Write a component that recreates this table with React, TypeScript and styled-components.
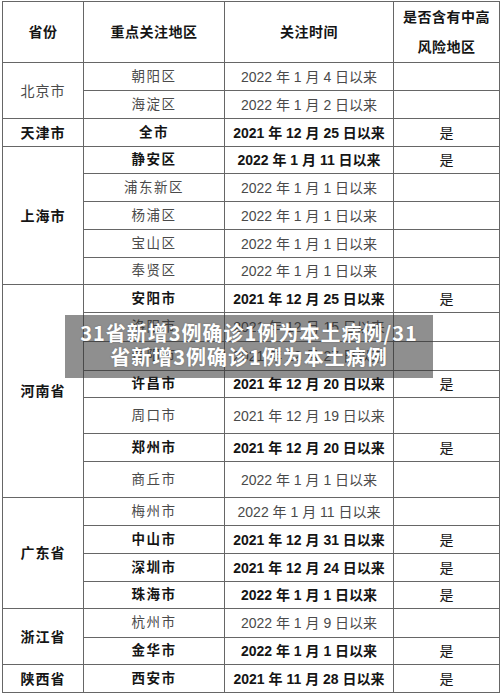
import React from 'react'
import styled, { createGlobalStyle } from 'styled-components'

type Row = { area: string; date: string; high?: boolean; bold?: boolean; h: number }
type Province = { name: string; bold?: boolean; rows: Row[] }

const data: Province[] = [
  {
    name: '北京市',
    rows: [
      { area: '朝阳区', date: '2022 年 1 月 4 日以来', h: 28 },
      { area: '海淀区', date: '2022 年 1 月 2 日以来', h: 28 },
    ],
  },
  {
    name: '天津市',
    bold: true,
    rows: [{ area: '全市', date: '2021 年 12 月 25 日以来', high: true, bold: true, h: 28 }],
  },
  {
    name: '上海市',
    bold: true,
    rows: [
      { area: '静安区', date: '2022 年 1 月 11 日以来', high: true, bold: true, h: 27 },
      { area: '浦东新区', date: '2022 年 1 月 1 日以来', h: 28 },
      { area: '杨浦区', date: '2022 年 1 月 1 日以来', h: 28 },
      { area: '宝山区', date: '2022 年 1 月 1 日以来', h: 28 },
      { area: '奉贤区', date: '2022 年 1 月 1 日以来', h: 27 },
    ],
  },
  {
    name: '河南省',
    bold: true,
    rows: [
      { area: '安阳市', date: '2021 年 12 月 25 日以来', high: true, bold: true, h: 28 },
      { area: '洛阳市', date: '2021 年 12 月 15 日以来', h: 29 },
      { area: '信阳市', date: '2021 年 12 月 27 日以来', h: 29 },
      { area: '许昌市', date: '2021 年 12 月 20 日以来', high: true, bold: true, h: 27 },
      { area: '周口市', date: '2021 年 12 月 19 日以来', h: 36 },
      { area: '郑州市', date: '2021 年 12 月 20 日以来', high: true, bold: true, h: 28 },
      { area: '商丘市', date: '2022 年 1 月 1 日以来', h: 36 },
    ],
  },
  {
    name: '广东省',
    bold: true,
    rows: [
      { area: '梅州市', date: '2022 年 1 月 11 日以来', h: 28 },
      { area: '中山市', date: '2021 年 12 月 31 日以来', high: true, bold: true, h: 28 },
      { area: '深圳市', date: '2021 年 12 月 24 日以来', high: true, bold: true, h: 28 },
      { area: '珠海市', date: '2022 年 1 月 1 日以来', high: true, bold: true, h: 27 },
    ],
  },
  {
    name: '浙江省',
    bold: true,
    rows: [
      { area: '杭州市', date: '2022 年 1 月 9 日以来', h: 29 },
      { area: '金华市', date: '2022 年 1 月 1 日以来', high: true, bold: true, h: 27 },
    ],
  },
  {
    name: '陕西省',
    bold: true,
    rows: [{ area: '西安市', date: '2021 年 11 月 28 日以来', high: true, bold: true, h: 28 }],
  },
]

const GlobalStyle = createGlobalStyle`
  html, body {
    margin: 0;
    padding: 0;
    background: #fff;
  }
  body {
    font-family: "Liberation Sans", "Noto Sans CJK SC", sans-serif;
  }
`

export default function App() {
  return (
    <Page>
      <GlobalStyle />
      <Table>
        <colgroup>
          <col style={{ width: 81 }} />
          <col style={{ width: 141 }} />
          <col style={{ width: 169 }} />
          <col style={{ width: 106 }} />
        </colgroup>
        <thead>
          <HeadRow>
            <HeadCell>省份</HeadCell>
            <HeadCell>重点关注地区</HeadCell>
            <HeadCell>关注时间</HeadCell>
            <HeadCell $tall>
              是否含有中高
              <br />
              风险地区
            </HeadCell>
          </HeadRow>
        </thead>
        <tbody>
          {data.map((p) =>
            p.rows.map((r, i) => (
              <BodyRow key={p.name + r.area} style={{ height: r.h }}>
                {i === 0 && (
                  <ProvinceCell rowSpan={p.rows.length} $bold={p.bold}>
                    {p.name}
                  </ProvinceCell>
                )}
                <AreaCell $bold={r.bold}>{r.area}</AreaCell>
                <DateCell $bold={r.bold}>{r.date}</DateCell>
                <FlagCell>{r.high ? '是' : ''}</FlagCell>
              </BodyRow>
            ))
          )}
        </tbody>
      </Table>
      <Caption>
        <CaptionLine>31省新增3例确诊1例为本土病例/31</CaptionLine>
        <CaptionLine>省新增3例确诊1例为本土病例</CaptionLine>
      </Caption>
    </Page>
  )
}

const Page = styled.div`
  position: relative;
  width: 500px;
  height: 694px;
  padding: 1px 0 0 2px;
  box-sizing: border-box;
  overflow: hidden;
`

const Table = styled.table`
  width: 498px;
  table-layout: fixed;
  border-collapse: collapse;
  border: 1px solid #555;
`

const HeadRow = styled.tr`
  height: 61px;
`

const Cell = styled.td<{ $bold?: boolean }>`
  border: 1px solid #666;
  padding: 0;
  text-align: center;
  vertical-align: middle;
  font-size: 13.5px;
  line-height: 16px;
  white-space: nowrap;
  font-weight: ${({ $bold }) => ($bold ? 700 : 400)};
  color: ${({ $bold }) => ($bold ? '#151515' : '#4a4a4a')};
`

const HeadCell = styled.th<{ $tall?: boolean }>`
  border: 1px solid #666;
  padding: 0;
  text-align: center;
  vertical-align: middle;
  font-size: 14px;
  font-weight: 700;
  color: #151515;
  letter-spacing: 0.5px;
  line-height: ${({ $tall }) => ($tall ? '30px' : '16px')};
  white-space: nowrap;
`

const BodyRow = styled.tr``

const ProvinceCell = styled(Cell)`
  font-size: 14px;
  letter-spacing: 1px;
`

const AreaCell = styled(Cell)`
  letter-spacing: 1.5px;
`

const DateCell = styled(Cell)`
  font-size: 14px;
`

const FlagCell = styled(Cell)`
  font-size: 14px;
  color: #151515;
`

const Caption = styled.div`
  position: absolute;
  left: 65px;
  top: 315px;
  width: 368px;
  height: 63px;
  padding-top: 6px;
  box-sizing: border-box;
  background: rgba(51, 51, 51, 0.55);
  display: flex;
  flex-direction: column;
  align-items: center;
`

const CaptionLine = styled.div`
  color: #fff;
  font-family: "Noto Sans CJK SC", "Liberation Sans", sans-serif;
  font-weight: 700;
  font-size: 20px;
  line-height: 24px;
  letter-spacing: 1px;
  white-space: nowrap;
  text-shadow: 0 0 2px rgba(0, 0, 0, 0.25);
`
